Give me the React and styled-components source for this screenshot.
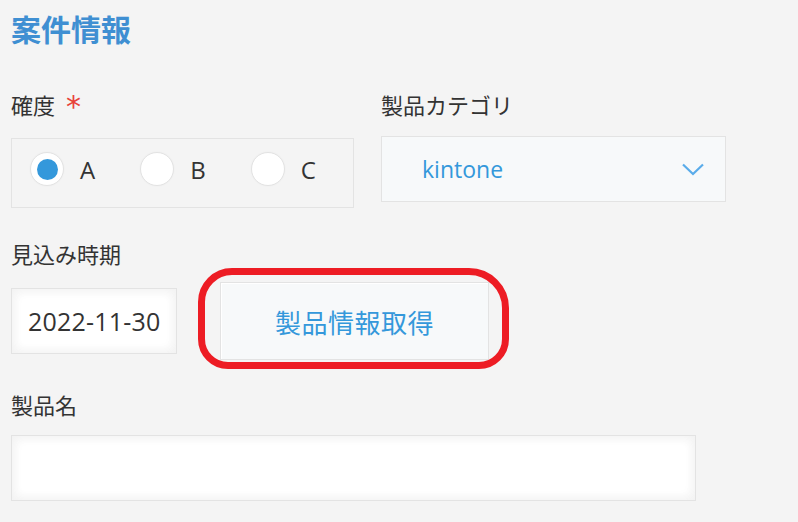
import React from "react";
import styled, { createGlobalStyle } from "styled-components";

const GlobalStyle = createGlobalStyle`
  html, body {
    margin: 0;
    padding: 0;
    background: #f4f4f4;
  }
  * {
    box-sizing: border-box;
  }
`;

const Page = styled.div`
  width: 798px;
  height: 522px;
  overflow: hidden;
  padding: 12px 0 0 11px;
  background: #f4f4f4;
  font-family: "Open Sans", "Noto Sans CJK JP", sans-serif;
  color: #333333;
`;

const Title = styled.h1`
  margin: 0;
  font-size: 30px;
  line-height: 36px;
  font-weight: 700;
  color: #3f8fd2;
`;

const Row = styled.div`
  display: flex;
  gap: ${({ $gap }) => $gap || 0}px;
  margin-top: ${({ $top }) => $top || 0}px;
`;

const Field = styled.div`
  display: flex;
  flex-direction: column;
  width: ${({ $width }) => ($width ? `${$width}px` : "auto")};
`;

const Label = styled.div`
  display: flex;
  align-items: center;
  gap: 11px;
  height: 30px;
  font-size: 22px;
  line-height: 30px;
  color: #333333;
`;

const Required = styled.span`
  color: #e8423a;
  font-size: 30px;
  font-family: "DejaVu Sans", sans-serif;
  line-height: 1;
  margin-top: 3px;
`;

const RadioBox = styled.div`
  display: flex;
  align-items: center;
  gap: 45px;
  height: 70px;
  margin-top: 18px;
  padding: 0 0 8px 18px;
  border: 1px solid #e3e3e3;
  background: #f4f4f4;
`;

const RadioItem = styled.label`
  display: flex;
  align-items: center;
  gap: 16px;
  font-size: 24px;
  color: #333333;
`;

const RadioCircle = styled.span`
  width: 34px;
  height: 34px;
  border-radius: 50%;
  border: 1px solid #e3e3e3;
  background: #ffffff;
  box-shadow: 0 0 2px rgba(0, 0, 0, 0.04);
  display: flex;
  align-items: center;
  justify-content: center;

  &::after {
    content: "";
    width: 21px;
    height: 21px;
    border-radius: 50%;
    background: ${({ $checked }) => ($checked ? "#3498db" : "transparent")};
  }
`;

const Select = styled.div`
  display: flex;
  align-items: center;
  justify-content: space-between;
  height: 66px;
  margin-top: 16px;
  padding: 0 21px 0 40px;
  border: 1px solid #e3e3e3;
  background: #f7f9fa;
  font-size: 23px;
  color: #3498db;
`;

const InputRow = styled.div`
  display: flex;
  align-items: center;
  gap: 43px;
  margin-top: 13px;
`;

const TextInput = styled.div`
  width: ${({ $width }) => $width}px;
  height: 66px;
  margin-top: ${({ $top }) => $top || 0}px;
  display: flex;
  align-items: center;
  padding-left: 16px;
  border: 1px solid #e3e3e3;
  background: #ffffff;
  box-shadow: inset 1px 1px 12px #f2f2f2, inset -1px -1px 12px #f2f2f2;
  font-size: 25px;
  letter-spacing: 0.2px;
  color: #333333;
`;

const ButtonWrap = styled.div`
  position: relative;
`;

const Button = styled.button`
  width: 269px;
  height: 78px;
  border: 1px solid #e3e3e3;
  background: #f7f9fa;
  box-shadow: inset 1px 1px 1px #ffffff;
  font-family: "Noto Sans CJK JP", sans-serif;
  font-size: 26px;
  letter-spacing: 0.5px;
  color: #3498db;
  cursor: pointer;
`;

const Annotation = styled.div`
  position: absolute;
  top: -14px;
  left: -22px;
  right: -20px;
  bottom: -9px;
  border: 7px solid #ed1c24;
  border-radius: 34px 40px 30px 30px;
  pointer-events: none;
`;

const Chevron = () => (
  <svg width="22" height="13" viewBox="0 0 22 13">
    <polyline
      points="1,1.5 11,11 21,1.5"
      fill="none"
      stroke="#5aacea"
      strokeWidth="2.2"
    />
  </svg>
);

const options = [
  { id: "A", checked: true },
  { id: "B", checked: false },
  { id: "C", checked: false },
];

const App = () => {
  return (
    <Page>
      <GlobalStyle />
      <Title>案件情報</Title>

      <Row $top={42} $gap={27}>
        <Field $width={343}>
          <Label>
            確度<Required>*</Required>
          </Label>
          <RadioBox>
            {options.map((o) => (
              <RadioItem key={o.id}>
                <RadioCircle $checked={o.checked} />
                {o.id}
              </RadioItem>
            ))}
          </RadioBox>
        </Field>
        <Field $width={345}>
          <Label>製品カテゴリ</Label>
          <Select>
            kintone
            <Chevron />
          </Select>
        </Field>
      </Row>

      <Field>
        <Label style={{ marginTop: 31 }}>見込み時期</Label>
        <InputRow>
          <TextInput $width={166}>2022-11-30</TextInput>
          <ButtonWrap>
            <Button>製品情報取得</Button>
            <Annotation />
          </ButtonWrap>
        </InputRow>
      </Field>

      <Field>
        <Label style={{ marginTop: 30 }}>製品名</Label>
        <TextInput $width={685} $top={15} />
      </Field>
    </Page>
  );
};

export default App;
